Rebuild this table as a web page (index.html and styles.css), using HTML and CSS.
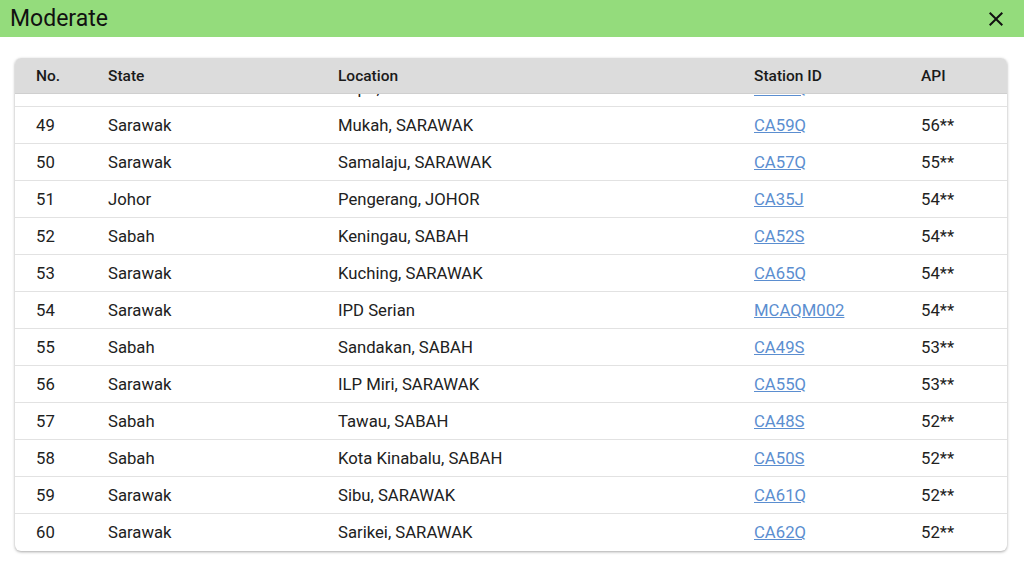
FILE: index.html
```html
<!DOCTYPE html>
<html>
<head>
<meta charset="utf-8">
<link rel="stylesheet" href="styles.css">
</head>
<body>
<header class="topbar">
  <h1 class="title">Moderate</h1>
  <button class="close" aria-label="Close">
    <svg width="24" height="24" viewBox="0 0 24 24"><path d="M19 6.41 17.59 5 12 10.59 6.41 5 5 6.41 10.59 12 5 17.59 6.41 19 12 13.41 17.59 19 19 17.59 13.41 12z" fill="#111"/></svg>
  </button>
</header>
<main class="content">
  <section class="card">
    <div class="row head">
      <div>No.</div><div>State</div><div>Location</div><div>Station ID</div><div>API</div>
    </div>
    <div class="body" id="tbody">
      <div class="row"><div>48</div><div>Sarawak</div><div>Kapit, SARAWAK</div><div><a href="#">CA60Q</a></div><div>56**</div></div>
      <div class="row"><div>49</div><div>Sarawak</div><div>Mukah, SARAWAK</div><div><a href="#">CA59Q</a></div><div>56**</div></div>
      <div class="row"><div>50</div><div>Sarawak</div><div>Samalaju, SARAWAK</div><div><a href="#">CA57Q</a></div><div>55**</div></div>
      <div class="row"><div>51</div><div>Johor</div><div>Pengerang, JOHOR</div><div><a href="#">CA35J</a></div><div>54**</div></div>
      <div class="row"><div>52</div><div>Sabah</div><div>Keningau, SABAH</div><div><a href="#">CA52S</a></div><div>54**</div></div>
      <div class="row"><div>53</div><div>Sarawak</div><div>Kuching, SARAWAK</div><div><a href="#">CA65Q</a></div><div>54**</div></div>
      <div class="row"><div>54</div><div>Sarawak</div><div>IPD Serian</div><div><a href="#">MCAQM002</a></div><div>54**</div></div>
      <div class="row"><div>55</div><div>Sabah</div><div>Sandakan, SABAH</div><div><a href="#">CA49S</a></div><div>53**</div></div>
      <div class="row"><div>56</div><div>Sarawak</div><div>ILP Miri, SARAWAK</div><div><a href="#">CA55Q</a></div><div>53**</div></div>
      <div class="row"><div>57</div><div>Sabah</div><div>Tawau, SABAH</div><div><a href="#">CA48S</a></div><div>52**</div></div>
      <div class="row"><div>58</div><div>Sabah</div><div>Kota Kinabalu, SABAH</div><div><a href="#">CA50S</a></div><div>52**</div></div>
      <div class="row"><div>59</div><div>Sarawak</div><div>Sibu, SARAWAK</div><div><a href="#">CA61Q</a></div><div>52**</div></div>
      <div class="row last"><div>60</div><div>Sarawak</div><div>Sarikei, SARAWAK</div><div><a href="#">CA62Q</a></div><div>52**</div></div>
    </div>
  </section>
</main>
<script src="script.js"></script>
</body>
</html>
```

FILE: styles.css
```css
* { box-sizing: border-box; }
html, body { margin: 0; padding: 0; background: #fff; }
body { font-family: Roboto, "Liberation Sans", sans-serif; color: #212121; width: 1024px; height: 565px; overflow: hidden; }
.topbar {
  height: 37px;
  background: #94dc7c;
  display: flex;
  align-items: center;
  justify-content: space-between;
  padding: 0 16px 0 10px;
}
.title { margin: 0; font-size: 23px; font-weight: 400; color: #111; }
.close { border: 0; background: none; padding: 0; width: 24px; height: 24px; display: flex; cursor: pointer; }
.content { padding: 21px 17px 0 15px; }
.card {
  border-radius: 6px;
  box-shadow: 0 1px 3px rgba(0,0,0,0.35);
  overflow: hidden;
  background: #fff;
}
.row {
  display: grid;
  grid-template-columns: 72px 230px 416px 167px 1fr;
  align-items: center;
  height: 37px;
  padding-left: 21px;
  font-size: 16.7px;
  border-bottom: 1px solid #e2e2e2;
}
.row.last { border-bottom: 0; }
.head {
  background: #dcdcdc;
  height: 36px;
  font-size: 15.5px;
  font-weight: 500;
  color: #1a1a1a;
  border-bottom: 1px solid #cfcfcf;
  padding-top: 1px;
}
.body { height: 457px; overflow: hidden; }
.row a { color: #5b8ed0; text-decoration: underline; }
```

FILE: script.js
```js
var b = document.getElementById('tbody');
b.scrollTop = b.scrollHeight;
```
